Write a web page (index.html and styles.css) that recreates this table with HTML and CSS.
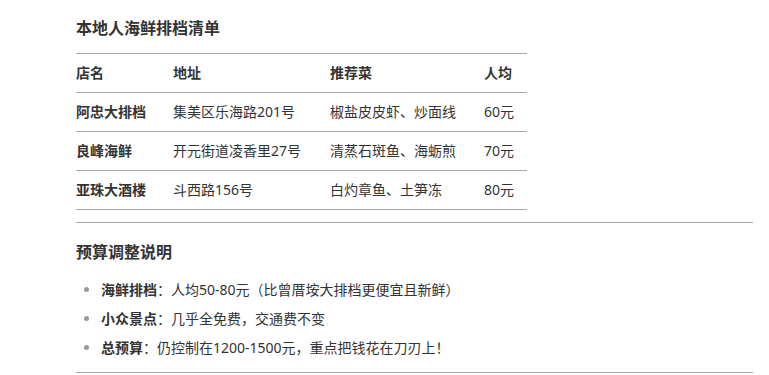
FILE: index.html
```html
<!DOCTYPE html>
<html lang="zh-CN">
<head>
<meta charset="utf-8">
<link rel="stylesheet" href="styles.css">
</head>
<body>
<main class="page">
  <h2 class="title">本地人海鲜排档清单</h2>
  <table class="list-table">
    <thead>
      <tr><th class="c1">店名</th><th class="c2">地址</th><th class="c3">推荐菜</th><th class="c4">人均</th></tr>
    </thead>
    <tbody>
      <tr><td class="name">阿忠大排档</td><td>集美区乐海路201号</td><td>椒盐皮皮虾、炒面线</td><td>60元</td></tr>
      <tr><td class="name">良峰海鲜</td><td>开元街道凌香里27号</td><td>清蒸石斑鱼、海蛎煎</td><td>70元</td></tr>
      <tr><td class="name">亚珠大酒楼</td><td>斗西路156号</td><td>白灼章鱼、土笋冻</td><td>80元</td></tr>
    </tbody>
  </table>
  <hr class="rule">
  <h2 class="title title-2">预算调整说明</h2>
  <ul class="notes">
    <li><strong>海鲜排档</strong>：人均50-80元（比曾厝垵大排档更便宜且新鲜）</li>
    <li><strong>小众景点</strong>：几乎全免费，交通费不变</li>
    <li><strong>总预算</strong>：仍控制在1200-1500元，重点把钱花在刀刃上！</li>
  </ul>
  <hr class="rule rule-bottom">
</main>
</body>
</html>
```
FILE: styles.css
```css
html, body {
  margin: 0;
  padding: 0;
  background: #ffffff;
}
body {
  font-family: "Noto Sans", "Noto Sans CJK SC", sans-serif;
  color: #333333;
  font-size: 14px;
}
.page {
  padding: 0 16px 0 76px;
}
.title {
  margin: 16px 0 0;
  font-size: 16px;
  line-height: 24px;
  font-weight: 700;
  color: #333333;
}
.list-table {
  margin-top: 13px;
  width: 451px;
  border-collapse: collapse;
  table-layout: fixed;
}
.list-table th,
.list-table td {
  height: 38px;
  padding: 0 16px 0 0;
  text-align: left;
  vertical-align: middle;
  font-size: 14px;
  line-height: 20px;
  border-bottom: 1px solid #a8a8a8;
  white-space: nowrap;
}
.list-table th {
  font-weight: 700;
  border-top: 1px solid #a8a8a8;
}
.list-table .c1 { width: 81px; }
.list-table .c2 { width: 141px; }
.list-table .c3 { width: 138px; }
.list-table .c4 { width: 27px; }
.list-table td.name {
  font-weight: 700;
}
.rule {
  margin: 12px 0 0;
  border: 0;
  border-top: 1px solid #a8a8a8;
  height: 0;
}
.title-2 {
  margin-top: 17px;
}
.notes {
  margin: 11px 0 0;
  padding: 0 0 0 25px;
  list-style: disc;
}
.notes li {
  line-height: 29px;
  font-size: 14px;
}
.notes li::marker {
  color: #999999;
}
.notes strong {
  font-weight: 700;
}
.rule-bottom {
  margin-top: 10px;
}
```
